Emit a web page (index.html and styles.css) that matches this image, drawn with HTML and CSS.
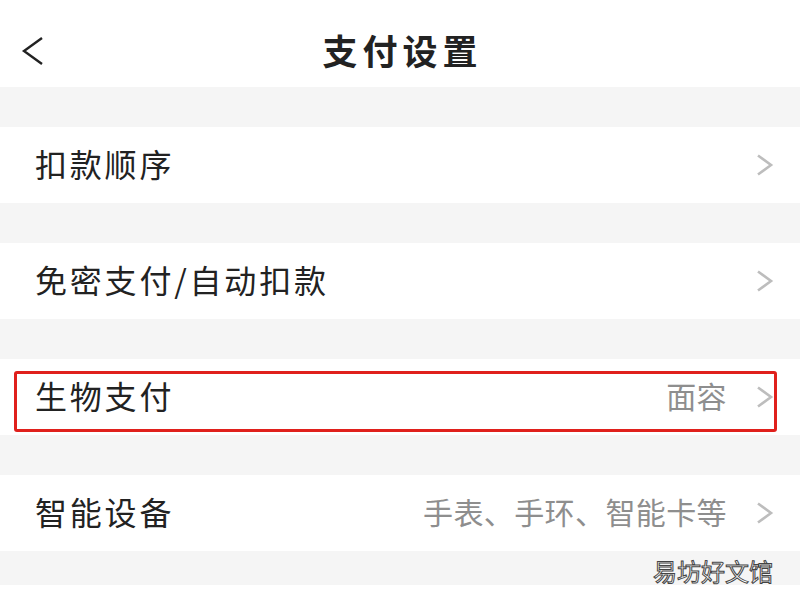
FILE: index.html
```html
<!DOCTYPE html>
<html lang="zh-CN">

<head>
    <meta charset="UTF-8">
    <meta name="viewport" content="width=device-width, initial-scale=1.0">
    <title>支付设置</title>
    <link rel="stylesheet" href="styles.css">
</head>

<body>
    <div class="header">
        <svg class="back" width="24" height="28" viewBox="0 0 24 28">
            <path d="M21 1 L3 14 L21 27" fill="none" stroke="#222" stroke-width="2.4" stroke-linejoin="miter" />
        </svg>
        <strong class="title">支付设置</strong>
    </div>

    <div class="gap"></div>
    <div class="row">
        <span class="label">扣款顺序</span>
        <svg class="arrow" width="18" height="22" viewBox="0 0 18 22">
            <path d="M2 1.5 L15 11 L2 20.5" fill="none" stroke="#bdbdbd" stroke-width="2.6" />
        </svg>
    </div>

    <div class="gap"></div>
    <div class="row">
        <span class="label">免密支付/自动扣款</span>
        <svg class="arrow" width="18" height="22" viewBox="0 0 18 22">
            <path d="M2 1.5 L15 11 L2 20.5" fill="none" stroke="#bdbdbd" stroke-width="2.6" />
        </svg>
    </div>

    <div class="gap"></div>
    <div class="row marked">
        <span class="label">生物支付</span>
        <span class="value">面容</span>
        <svg class="arrow" width="18" height="22" viewBox="0 0 18 22">
            <path d="M2 1.5 L15 11 L2 20.5" fill="none" stroke="#bdbdbd" stroke-width="2.6" />
        </svg>
        <div class="highlight"></div>
    </div>

    <div class="gap"></div>
    <div class="row">
        <span class="label">智能设备</span>
        <span class="value">手表、手环、智能卡等</span>
        <svg class="arrow" width="18" height="22" viewBox="0 0 18 22">
            <path d="M2 1.5 L15 11 L2 20.5" fill="none" stroke="#bdbdbd" stroke-width="2.6" />
        </svg>
    </div>

    <div class="gap last">
        <span class="watermark">易坊好文馆</span>
    </div>
</body>

</html>
```

FILE: styles.css
```css
body {
    margin: 0;
    background: #fff;
    font-family: "Noto Sans CJK SC", "Noto Sans", sans-serif;
    color: #222;
}

.header {
    height: 87px;
    position: relative;
    display: flex;
    align-items: center;
    justify-content: center;
}

.back {
    position: absolute;
    left: 21px;
    top: 37px;
}

.title {
    font-size: 35px;
    font-weight: 700;
    letter-spacing: 5px;
    margin-left: 5px;
    margin-top: 12px;
}

.gap {
    height: 40px;
    background: #f5f5f5;
}

.gap.last {
    height: 34px;
    position: relative;
}

.row {
    height: 76px;
    display: flex;
    align-items: center;
    padding: 0 26px 0 35px;
    position: relative;
}

.label {
    flex: 1;
    font-size: 32px;
    letter-spacing: 2.8px;
    margin-top: -4px;
}

.value {
    font-size: 30px;
    letter-spacing: 0.4px;
    color: #8e8e8e;
    margin-right: 29px;
    margin-top: -4px;
}

.arrow {
    display: block;
}

.highlight {
    position: absolute;
    left: 14px;
    right: 23px;
    top: 12px;
    bottom: 3px;
    border: 3px solid #e0201c;
    border-radius: 3px;
}

.watermark {
    position: absolute;
    right: 27px;
    top: 2px;
    font-size: 24px;
    color: #fff;
    -webkit-text-stroke: 1px #444;
    letter-spacing: 0;
}
```
